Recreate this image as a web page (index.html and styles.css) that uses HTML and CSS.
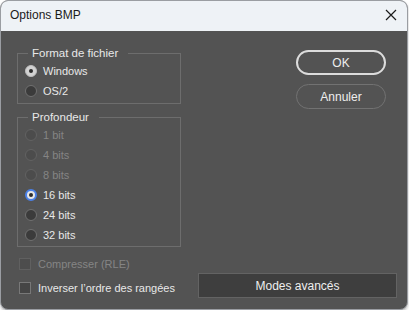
FILE: index.html
```html
<!DOCTYPE html>
<html lang="fr">
<head>
<meta charset="utf-8">
<title>Options BMP</title>
<link rel="stylesheet" href="styles.css">
</head>
<body>
<div class="window">
  <div class="titlebar">
    <span class="title">Options BMP</span>
    <span class="close">
      <svg width="12" height="12" viewBox="0 0 12 12"><path d="M1 1 L11 11 M11 1 L1 11" stroke="#1a1a1a" stroke-width="1.2" fill="none"/></svg>
    </span>
  </div>
  <div class="content">
    <div class="left">
      <fieldset class="group g1">
        <legend>Format de fichier</legend>
        <div class="row"><span class="radio checked"></span><span class="label">Windows</span></div>
        <div class="row"><span class="radio"></span><span class="label">OS/2</span></div>
      </fieldset>
      <fieldset class="group g2">
        <legend>Profondeur</legend>
        <div class="row disabled"><span class="radio"></span><span class="label">1 bit</span></div>
        <div class="row disabled"><span class="radio"></span><span class="label">4 bits</span></div>
        <div class="row disabled"><span class="radio"></span><span class="label">8 bits</span></div>
        <div class="row"><span class="radio checked focus"></span><span class="label">16 bits</span></div>
        <div class="row"><span class="radio"></span><span class="label">24 bits</span></div>
        <div class="row"><span class="radio"></span><span class="label">32 bits</span></div>
      </fieldset>
      <div class="checks">
        <div class="row crow disabled"><span class="check"></span><span class="label">Compresser (RLE)</span></div>
        <div class="row crow"><span class="check"></span><span class="label">Inverser l’ordre des rangées</span></div>
      </div>
    </div>
    <div class="right">
      <div class="btns">
        <button class="btn primary">OK</button>
        <button class="btn">Annuler</button>
      </div>
      <button class="adv">Modes avancés</button>
    </div>
  </div>
</div>
</body>
</html>
```
FILE: styles.css
```css
html, body {
  margin: 0;
  padding: 0;
  background: #ffffff;
}
body {
  font-family: "Liberation Sans", Arial, sans-serif;
  font-size: 11px;
}
.window {
  width: 406px;
  height: 308px;
  border: 1px solid #9a9da2;
  border-radius: 8px;
  overflow: hidden;
  display: flex;
  flex-direction: column;
  background: #535353;
  box-shadow: 0 2px 3px rgba(0,0,0,0.25);
}
.titlebar {
  height: 30px;
  flex: none;
  background: #eef2f6;
  display: flex;
  align-items: center;
  justify-content: space-between;
  padding: 0 10px 0 9px;
}
.title {
  font-size: 12px;
  color: #1b1b1b;
  margin-top: -2px;
}
.close {
  display: flex;
  margin-top: -2px;
}
.content {
  flex: 1;
  display: flex;
  padding-left: 16px;
}
.left {
  width: 164px;
  padding-top: 14px;
  display: flex;
  flex-direction: column;
}
.group {
  margin: 0;
  border: 1px solid #6d6d6d;
  padding: 0 0 1px 7px;
  min-width: 0;
}
.g1 { padding-bottom: 2px; }
.g2 { margin-top: 5px; }
.group legend {
  color: #e8e8e8;
  padding: 0 10px 0 4px;
  margin-left: 3px;
  line-height: 16px;
  height: 16px;
  font-size: 11.5px;
}
.row {
  height: 20px;
  display: flex;
  align-items: center;
  color: #e8e8e8;
}
.row.disabled { color: #858585; }
.label { margin-left: 6px; white-space: nowrap; }
.radio {
  width: 12px;
  height: 12px;
  box-sizing: border-box;
  border-radius: 50%;
  border: 1px solid #707070;
  background: #3b3b3b;
  display: flex;
  align-items: center;
  justify-content: center;
  flex: none;
}
.disabled .radio {
  border-color: #626262;
  background: #4c4c4c;
}
.radio.checked {
  background: #d2d2d2;
  border-color: #bdbdbd;
}
.radio.checked::after {
  content: "";
  width: 4px;
  height: 4px;
  border-radius: 50%;
  background: #2b2b2b;
}
.radio.focus {
  border: 2px solid #4a80e8;
  background: #e6e6e6;
}
.checks {
  margin-top: 7px;
  display: flex;
  flex-direction: column;
  gap: 4px;
  padding-left: 2px;
}
.crow .label { margin-left: 7px; }
.check {
  width: 12px;
  height: 12px;
  box-sizing: border-box;
  border: 1px solid #787878;
  background: #454545;
  flex: none;
}
.disabled .check {
  border-color: #606060;
  background: #4d4d4d;
}
.right {
  flex: 1;
  display: flex;
  flex-direction: column;
  margin-left: 17px;
  margin-right: 9px;
  padding-top: 19px;
  padding-bottom: 11px;
}
.btns {
  display: flex;
  flex-direction: column;
  align-items: flex-end;
  gap: 9px;
  margin-right: 12px;
}
button {
  font-family: inherit;
  font-size: 12px;
  margin: 0;
  cursor: default;
}
.btn {
  width: 90px;
  height: 25px;
  border-radius: 13px;
  border: 1px solid #727272;
  background: #535353;
  color: #eeeeee;
  padding: 0;
}
.btn.primary {
  border: 2px solid #dcdcdc;
}
.adv {
  margin-top: auto;
  height: 25px;
  width: 199px;
  background: #3e3e3e;
  border: 1px solid #636363;
  color: #eeeeee;
  padding: 0;
}
```
